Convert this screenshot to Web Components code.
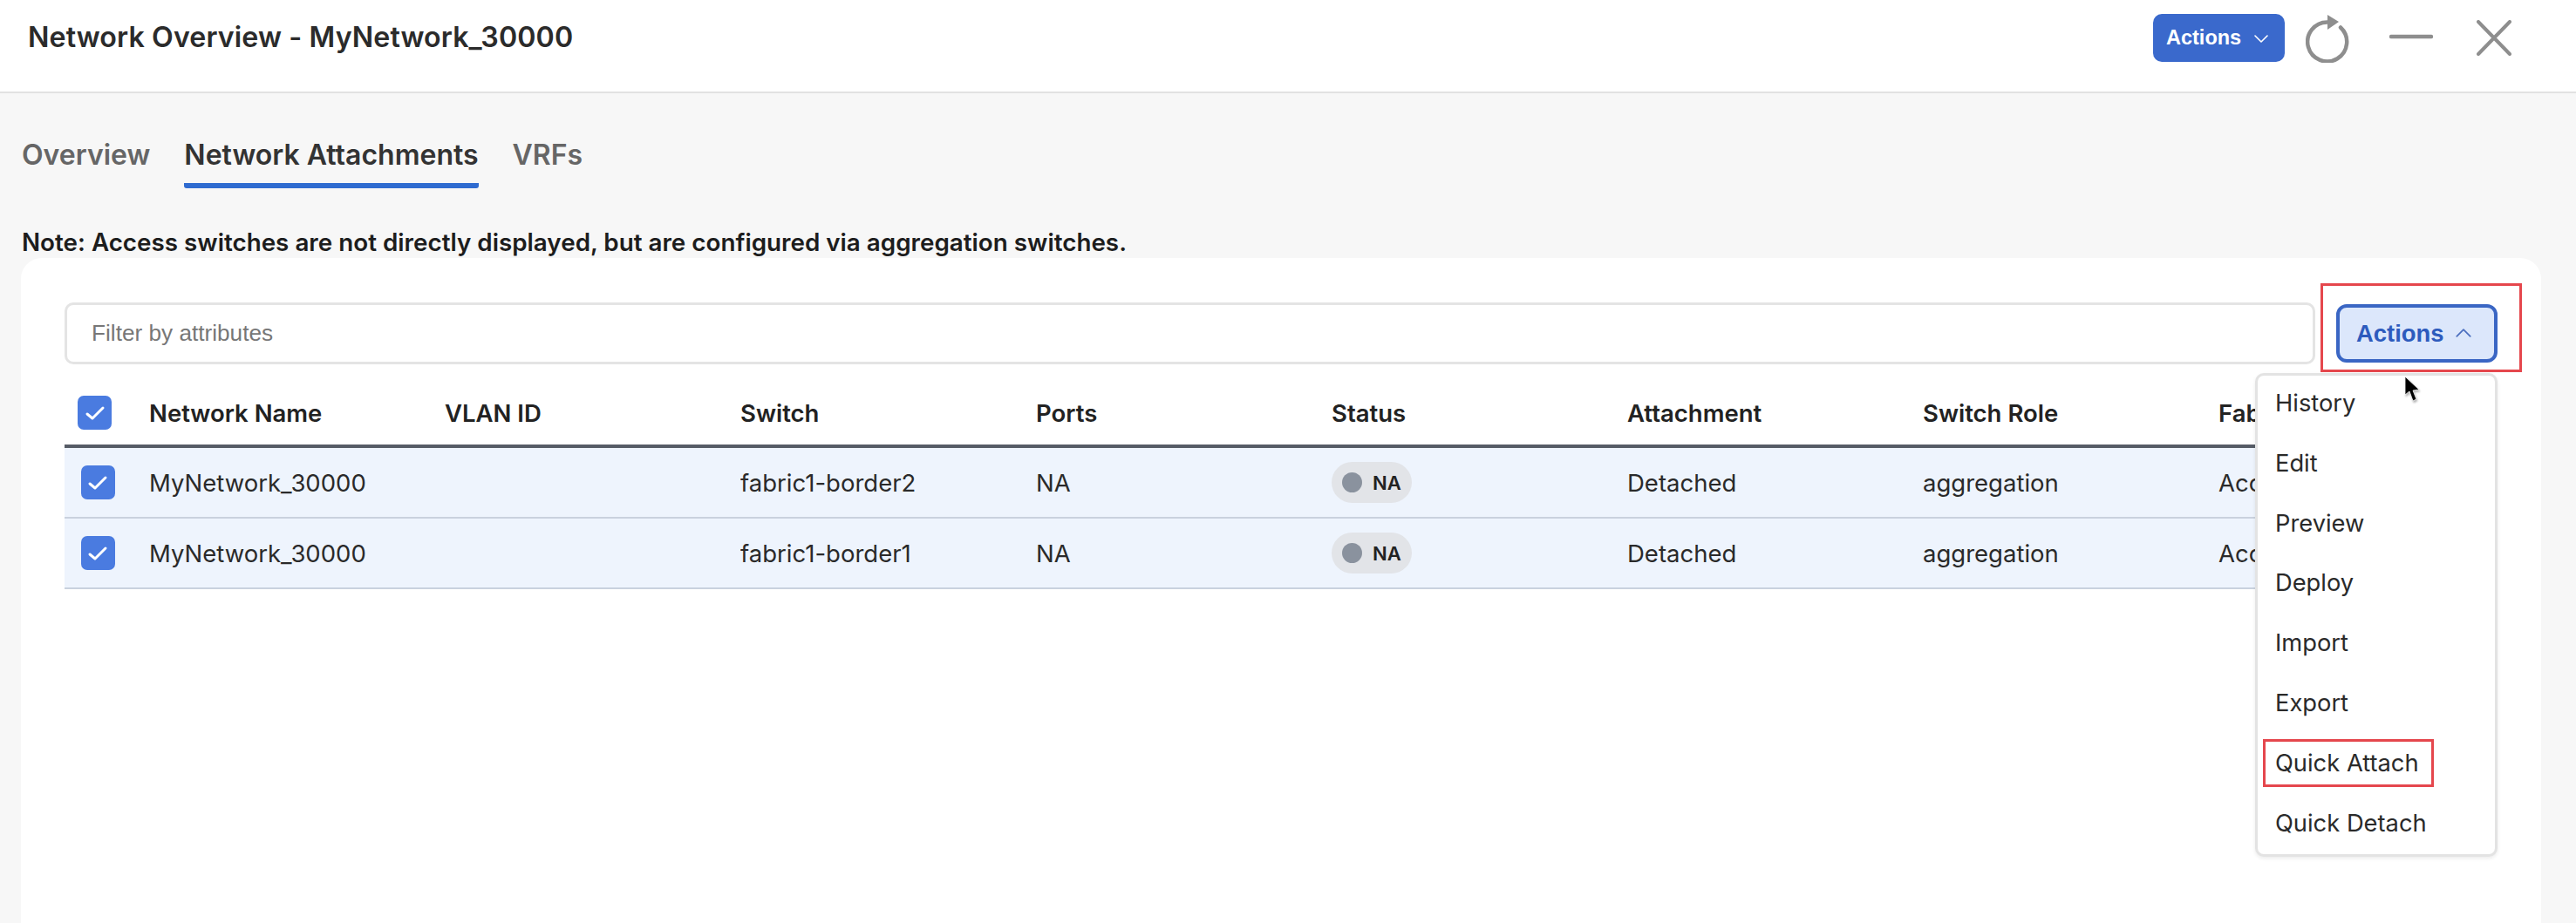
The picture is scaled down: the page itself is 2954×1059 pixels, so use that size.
<!doctype html>
<html><head><meta charset="utf-8"><title>Network Overview</title>
<style>
html,body{margin:0;height:1059px;overflow:hidden;background:#f7f7f7;font-family:Inter,"Liberation Sans",sans-serif;color:#222}
</style></head><body>
<net-page>
  <net-header slot="header" title-text="Network Overview - MyNetwork_30000"></net-header>
  <net-tabs slot="tabs"><span>Overview</span><span class="active" data-active>Network Attachments</span><span>VRFs</span></net-tabs>
  <net-note slot="note">Note: Access switches are not directly displayed, but are configured via aggregation switches.</net-note>
  <net-card slot="card">
    <filter-bar>Filter by attributes</filter-bar>
    <net-table>
      <net-row head>
        <span>Network Name</span><span>VLAN ID</span><span>Switch</span><span>Ports</span><span>Status</span><span>Attachment</span><span>Switch Role</span><span>Fabric Name</span>
      </net-row>
      <net-row>
        <span>MyNetwork_30000</span><span></span><span>fabric1-border2</span><span>NA</span><span><status-pill>NA</status-pill></span><span>Detached</span><span>aggregation</span><span>Access</span>
      </net-row>
      <net-row>
        <span>MyNetwork_30000</span><span></span><span>fabric1-border1</span><span>NA</span><span><status-pill>NA</status-pill></span><span>Detached</span><span>aggregation</span><span>Access</span>
      </net-row>
    </net-table>
  </net-card>
</net-page>
<script>
function def(name, html, setup){
  customElements.define(name, class extends HTMLElement{
    constructor(){super();this.attachShadow({mode:'open'}).innerHTML=html;}
    connectedCallback(){ if(setup) setup.call(this); }
  });
}
const chev = (d,w=16) => `<svg width="${w}" height="${Math.round(w*.62)}" viewBox="0 0 16 10" fill="none" stroke="currentColor" stroke-width="1.6" stroke-linecap="round" stroke-linejoin="round"><path d="${d}"/></svg>`;

def('net-page',`<style>:host{display:flex;flex-direction:column;height:1059px;overflow:hidden}
 .body{flex:1;display:flex;flex-direction:column;min-height:0}</style>
 <slot name="header"></slot><div class="body"><slot name="tabs"></slot><slot name="note"></slot><slot name="card"></slot></div>`);

def('net-header',`<style>:host{display:flex;align-items:flex-start;height:105px;background:#fff;border-bottom:2px solid #e2e2e2;padding:0 74px 0 32px;box-sizing:content-box;justify-content:space-between}
 h1{margin:0;font:600 32.2px/38px Inter,sans-serif;color:#2b2b2b;padding-top:24px;letter-spacing:.1px}
 .tools{display:flex;align-items:flex-start;padding-top:16px}
 button{all:unset;box-sizing:border-box;width:151px;height:55px;background:#3a69cc;border-radius:10px;color:#fff;font:700 23.5px "Liberation Sans",sans-serif;display:flex;align-items:center;padding-left:15px;gap:15px}
 .refresh{margin:1px 0 0 24px}.min{margin:23px 0 0 46px}.x{margin:7px 0 0 50px}
 </style><h1></h1><div class="tools">
 <button>Actions ${chev('M1 2 L8 9 L15 2')}</button>
 <svg class="refresh" width="50" height="55" viewBox="0 0 50 55" fill="none"><path d="M25 8.5 A22.5 22.5 0 1 0 40 14.5" stroke="#8e8e8e" stroke-width="4.5" stroke-linecap="round"/><path d="M25 0 L38 8 L25 17Z" fill="#8e8e8e"/></svg>
 <svg class="min" width="50" height="6" viewBox="0 0 50 6"><path d="M2 3H48" stroke="#8e8e8e" stroke-width="4.5" stroke-linecap="round"/></svg>
 <svg class="x" width="40" height="41" viewBox="0 0 40 41"><path d="M2 2 L38 39 M38 2 L2 39" stroke="#8e8e8e" stroke-width="4" stroke-linecap="round"/></svg>
 </div>`,function(){this.shadowRoot.querySelector('h1').textContent=this.getAttribute('title-text');});

def('net-tabs',`<style>:host{display:flex;gap:39px;padding:51px 0 0 25px;height:58px;font:600 32px/40px Inter,sans-serif;color:#666}
 ::slotted(span){display:block;height:58px;box-sizing:border-box}
 ::slotted([data-active]){color:#333;border-bottom:6px solid #2f6bd0;border-radius:0 0 3px 3px}
 </style><slot></slot>`);

def('net-note',`<style>:host{display:block;padding:45px 0 0 25px;font:600 27.8px/34px Inter,sans-serif;color:#1d1d1d;height:34px;margin-bottom:1px}</style><slot></slot>`);

def('net-card',`<style>:host{display:block;flex:1;margin:0 40px 0 24px;background:#fff;border-radius:24px 24px 0 0;padding:51px 50px 0 50px;position:relative}</style><slot></slot>`);

def('filter-bar',`<style>:host{display:flex;align-items:center;gap:24px;height:71px}
 .in{flex:1;height:71px;box-sizing:border-box;border:3.5px solid #e4e4e4;border-radius:10px;display:flex;align-items:center;padding-left:28px;color:#777;font:400 26.2px "Liberation Sans",sans-serif}
 </style><div class="in"><slot></slot></div><actions-menu></actions-menu>`);

def('actions-menu',`<style>:host{display:block;position:relative;width:185px;height:67px}
 button{all:unset;box-sizing:border-box;width:185px;height:67px;background:#dce7fb;border:4px solid #3a66c4;border-radius:12px;color:#2d5bbd;font:700 27.4px "Liberation Sans",sans-serif;display:flex;align-items:center;padding-left:19px;gap:14px}
 button svg{color:#4c6fbf}
 .mark{position:absolute;top:-24px;left:-18px;width:231px;height:102px;box-sizing:border-box;border:3.5px solid #e5474d;pointer-events:none;z-index:3}
 .menu{position:absolute;z-index:2;top:79px;right:0;width:278px;height:555px;box-sizing:border-box;background:#fff;border:3px solid #e3e3e3;border-radius:10px;box-shadow:0 2px 4px rgba(0,0,0,.08);padding:0 0 0 20px;display:flex;flex-direction:column;font:400 27.3px Inter,sans-serif;color:#2a2a2a}
 .menu div{height:68.8px;line-height:68.8px;position:relative;white-space:nowrap;flex:none}
 .menu div:first-child{margin-top:-2px}
 .qa{position:absolute;left:-14px;top:6px;width:196px;height:55px;box-sizing:border-box;border:3.5px solid #e5474d}
 svg.cur{position:absolute;z-index:4;left:78px;top:83px;filter:drop-shadow(1px 2px 1px rgba(0,0,0,.3))}
 </style><button>Actions ${chev('M1 8 L8 1 L15 8',18)}</button><div class="mark"></div>
 <div class="menu"><div>History</div><div>Edit</div><div>Preview</div><div>Deploy</div><div>Import</div><div>Export</div><div><span class="qa"></span>Quick Attach</div><div>Quick Detach</div></div>
 <svg class="cur" width="20" height="30" viewBox="0 0 20 30"><path d="M1 0 L1 21 L6 17 L10 28 L14 26 L10 16 L17 15Z" fill="#000" stroke="#fff" stroke-width=".8"/></svg>`);

def('net-table',`<style>:host{display:block;margin-top:19px}</style><slot></slot>`);

def('check-box',`<style>:host{display:inline-flex;width:39px;height:39px;border-radius:7px;background:#4a7be0;align-items:center;justify-content:center}</style>
 <svg width="24" height="20" viewBox="0 0 24 20" fill="none"><path d="M3 11 L9 16 L21 4" stroke="#fff" stroke-width="3" stroke-linecap="round" stroke-linejoin="round"/></svg>`);

def('net-row',`<style>:host{display:grid;grid-template-columns:97px repeat(7,339px) 1fr;align-items:center;height:79px;background:#eef4fd;border-bottom:2px solid #c9d1de;font:400 27.5px Inter,sans-serif;color:#2a2a2a;white-space:nowrap}
 :host([head]){height:73px;background:#fff;border-bottom:4px solid #565c66;font-weight:600;color:#222;font-size:27.5px}
 .c{padding-left:18.5px}:host([head]) .c{padding-left:15px}
 ::slotted(span){display:block;overflow:hidden}
 </style><div class="c"><check-box></check-box></div><slot></slot>`);

def('status-pill',`<style>:host{display:inline-flex;align-items:center;gap:12px;width:92px;height:47px;box-sizing:border-box;padding-left:12px;background:#e2e4e8;border-radius:24px;font:600 22px Inter,sans-serif;color:#222;vertical-align:middle}
 i{width:23px;height:23px;border-radius:50%;background:#8a929e;display:block}</style><i></i><slot></slot>`);
</script>
</body></html>
